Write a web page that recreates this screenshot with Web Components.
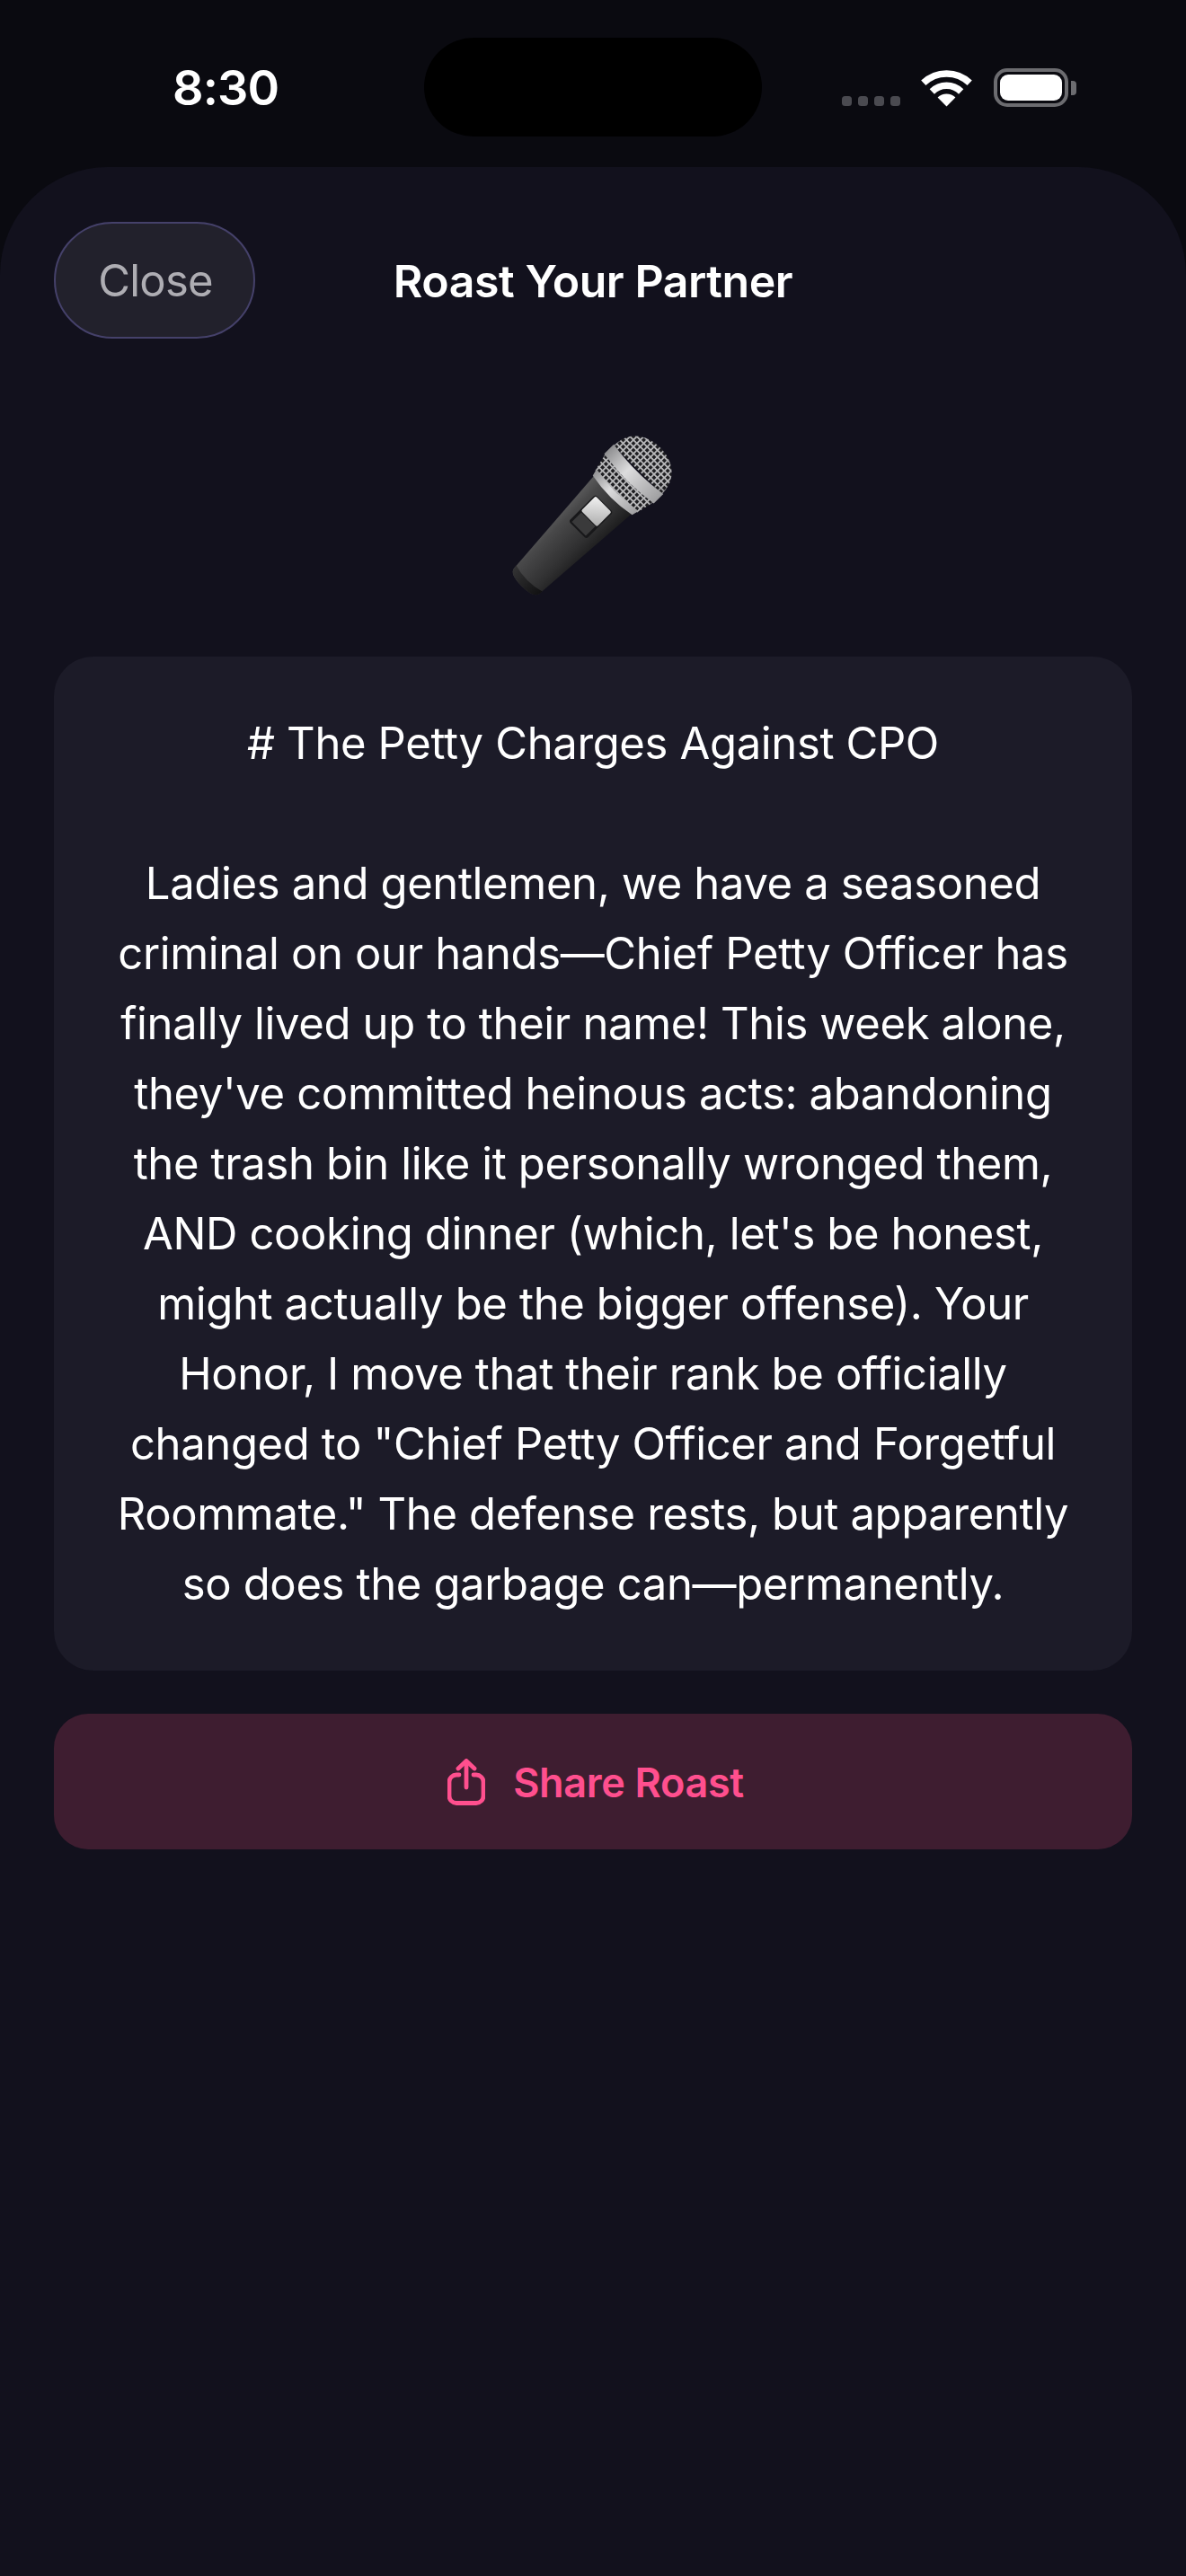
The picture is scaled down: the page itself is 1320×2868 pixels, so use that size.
<!doctype html>
<html lang="en"><head><meta charset="utf-8"><title>Roast Your Partner</title>
<style>html,body{margin:0;background:#0a0a10}body{width:1320px;height:2868px;overflow:hidden;font-family:Inter,"Liberation Sans",sans-serif}</style>
</head><body>
<roast-screen>
  <status-bar></status-bar>
  <roast-sheet>
    <sheet-header title-text="Roast Your Partner"></sheet-header>
    <mic-art></mic-art>
    <roast-card>
      # The Petty Charges Against CPO<br><br>Ladies and gentlemen, we have a seasoned<br>criminal on our hands—Chief Petty Officer has<br>finally lived up to their name! This week alone,<br>they've committed heinous acts: abandoning<br>the trash bin like it personally wronged them,<br>AND cooking dinner (which, let's be honest,<br>might actually be the bigger offense). Your<br>Honor, I move that their rank be officially<br>changed to "Chief Petty Officer and Forgetful<br>Roommate." The defense rests, but apparently<br>so does the garbage can—permanently.
    </roast-card>
    <share-button>Share Roast</share-button>
  </roast-sheet>
</roast-screen>
<script>
function def(name, html){
  customElements.define(name, class extends HTMLElement{
    constructor(){super();const s=this.attachShadow({mode:'open'});s.innerHTML=typeof html==='function'?html(this):html;}
  });
}
def('roast-screen',`<style>:host{display:flex;flex-direction:column;width:1320px;height:2868px;background:#0a0a10}</style><slot></slot>`);
def('status-bar',`<style>
:host{display:block;height:186px;box-sizing:border-box;padding-top:42px}
.row{display:flex;align-items:center;height:110px;padding-left:192px}
.time{width:280px;font:560 54px/1 Inter,sans-serif;color:#fff;letter-spacing:-.9px;padding-top:2px}
.island{width:376px;height:110px;border-radius:55px;background:#000}
.right{display:flex;margin-left:89px;height:43px;align-items:stretch}
.dots{display:flex;gap:7px;align-items:flex-end;width:65px;padding-bottom:1px}
.dots i{width:11px;height:11px;border-radius:3.5px;background:#4a4a50}
svg{display:block}
.wifi{margin-left:23px}
.batt{margin-left:24px;width:83px;height:43px;box-sizing:border-box;border:4px solid #6c6c70;border-radius:15px;padding:3px;position:relative}
.batt b{display:block;height:100%;background:#fff;border-radius:9px}
.nub{width:6px;height:16px;margin:14px 0 0 3px;background:#6c6c70;border-radius:0 4px 4px 0}
</style><div class="row"><div class="time">8:30</div><div class="island"></div><div class="right">
<div class="dots"><i></i><i></i><i></i><i></i></div>
<svg class="wifi" width="57" height="43" viewBox="0 0 57 43"><g fill="none" stroke="#fff" stroke-width="7.5"><path d="M2.8 16.3A37 37 0 0 1 54.2 16.3"/><path d="M12.3 26A23 23 0 0 1 44.7 26"/></g><path d="M28.5 42.5L18.6 32.6A14 14 0 0 1 38.4 32.6Z" fill="#fff"/></svg>
<div class="batt"><b></b></div><div class="nub"></div>
</div></div>`);
def('roast-sheet',`<style>:host{display:block;flex:1;background:#12111d;border-radius:120px 120px 0 0;padding:61px 60px 0}</style><slot></slot>`);
def('sheet-header',h=>`<style>
:host{display:grid;grid-template-columns:1fr auto 1fr;align-items:center}
.close{justify-self:start;width:224px;height:130px;box-sizing:border-box;border:2px solid #45416a;border-radius:65px;background:#22212c;color:#aeadb3;font:400 49px/1 Inter,sans-serif;display:flex;align-items:center;justify-content:center;letter-spacing:-.8px;padding-left:2px}
.t{font:600 50px/1 Inter,sans-serif;color:#fff;letter-spacing:-.45px;white-space:nowrap;padding-top:1px}
</style><div class="close">Close</div><div class="t">${h.getAttribute('title-text')||'Roast Your Partner'}</div><div></div>`);
def('mic-art',`<style>:host{display:flex;justify-content:center;margin-top:103px}svg{display:block}</style>
<svg width="200" height="200" viewBox="0 0 200 200" role="img" aria-label="microphone">
<defs>
<pattern id="mesh" width="5.4" height="5.4" patternUnits="userSpaceOnUse"><rect width="5.4" height="5.4" fill="#b8b8ba"/><rect x=".9" y=".9" width="3.6" height="3.6" rx=".5" fill="#1f1f22"/></pattern>
<linearGradient id="body" x1="0" x2="1" y1="0" y2="0"><stop offset="0" stop-color="#5a5a5b"/><stop offset=".2" stop-color="#484849"/><stop offset=".7" stop-color="#303031"/><stop offset="1" stop-color="#1c1c1d"/></linearGradient>
<linearGradient id="band" x1="0" x2="1" y1="0" y2="0"><stop offset="0" stop-color="#8f8f91"/><stop offset=".4" stop-color="#dcdcdd"/><stop offset="1" stop-color="#9f9fa1"/></linearGradient>
<linearGradient id="slide" x1="0" x2="1" y1="0" y2="1"><stop offset="0" stop-color="#f2f2f2"/><stop offset="1" stop-color="#adadad"/></linearGradient>
<linearGradient id="foot" x1="0" x2="1" y1="0" y2="0"><stop offset="0" stop-color="#333334"/><stop offset="1" stop-color="#111112"/></linearGradient>
<radialGradient id="shade" cx=".4" cy=".6" r=".75"><stop offset=".7" stop-color="#000" stop-opacity="0"/><stop offset="1" stop-color="#000" stop-opacity=".3"/></radialGradient>
</defs>
<g transform="translate(145 48) rotate(45)">
<path d="M-30 29L-20 168Q-19 176 0 176Q19 176 20 168L30 29Z" fill="url(#body)"/>
<path d="M-20.500 164L-20 168Q-19 176 0 176Q19 176 20 168L20.500 164Q0 170 -20.500 164Z" fill="url(#foot)"/>
<path d="M-33 27L-38 6L38 6L33 27Q0 32 -33 27Z" fill="url(#mesh)"/>
<path d="M-33 25Q0 31 33 25L31 33Q0 39 -31 33Z" fill="url(#band)"/>
<path d="M-38 -7C-38 -31 -20 -42 0 -42C20 -42 38 -31 38 -7Z" fill="url(#mesh)"/>
<path d="M-38 -7C-38 -31 -20 -42 0 -42C20 -42 38 -31 38 -7Z" fill="url(#shade)"/>
<path d="M-39 -8Q0 -2 39 -8L39 7Q0 13 -39 7Z" fill="url(#band)"/>
<rect x="-14" y="46" width="28" height="42" rx="3" fill="#18181a"/>
<rect x="-12.500" y="47" width="25" height="23" rx="2" fill="url(#slide)"/>
<rect x="-11" y="71" width="22" height="15" fill="#3a3a3b"/>
</g></svg>`);
def('roast-card',`<style>:host{display:block;margin-top:51px;background:#1c1b28;border-radius:44px;padding:58px 0 57px;text-align:center;color:#fff;font:400 49px/78px Inter,sans-serif;white-space:nowrap;letter-spacing:-.36px}</style><slot></slot>`);
def('share-button',`<style>
:host{display:flex;height:151px;box-sizing:border-box;padding:2px 0 0 6px;margin-top:48px;background:#3e1d30;border-radius:38px;align-items:center;justify-content:center;gap:31px;color:#ff4f8e;font:600 45px/1 Inter,sans-serif;letter-spacing:-.36px}
svg{display:block;margin-top:-2px}</style>
<svg width="42" height="52" viewBox="0 0 42 52" fill="none" stroke="#ff4f8e" stroke-width="4.8" stroke-linecap="round" stroke-linejoin="round"><path d="M13 18H10a8 8 0 0 0-8 8V41.500a8 8 0 0 0 8 8H32a8 8 0 0 0 8-8V26a8 8 0 0 0-8-8H29"/><path d="M21 32V3"/><path d="M12 11L21 2.500L30 11"/></svg>
<slot></slot>`);
</script>
</body></html>
